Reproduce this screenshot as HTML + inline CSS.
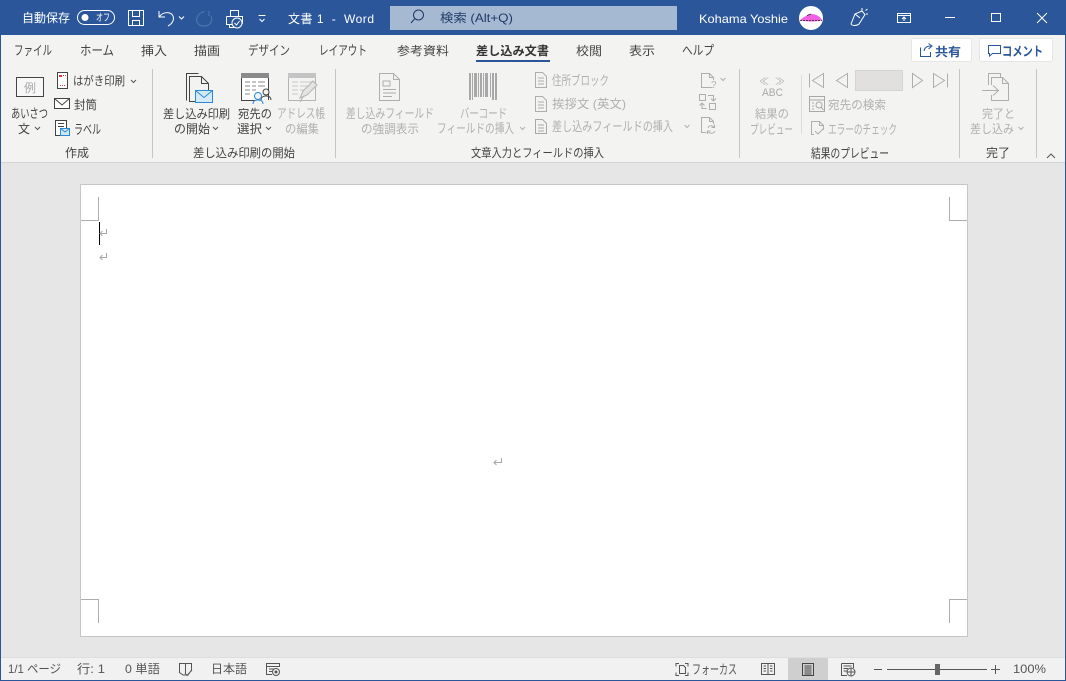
<!DOCTYPE html>
<html lang="ja"><head><meta charset="utf-8"><title>文書 1 - Word</title>
<style>
html,body{margin:0;padding:0;background:#e6e6e6;width:1066px;height:681px;overflow:hidden}
svg{display:block}
text{font-family:"Liberation Sans","Noto Sans CJK JP",sans-serif;font-size:12px;fill:#444;white-space:pre}
text.k{font-size:13px}
.w{fill:#fff}
.d{fill:#b0b0b0}
.g{fill:#3c3c3c}
.s{fill:#555}
.ic{fill:none;stroke:#444;stroke-width:1}
.ig{fill:none;stroke:#aeaeae;stroke-width:1}
.iw{fill:none;stroke:#fff;stroke-width:1}
.chv{fill:none;stroke:#555;stroke-width:1}
.chg{fill:none;stroke:#b0b0b0;stroke-width:1}
</style></head><body>
<svg width="1066" height="681" viewBox="0 0 1066 681" xmlns="http://www.w3.org/2000/svg">
<rect width="1066" height="681" fill="#e6e6e6"/>
<!-- ribbon -->
<rect x="0" y="35" width="1066" height="127" fill="#f3f3f2"/>
<rect x="0" y="162" width="1066" height="1" fill="#d4d4d4"/>
<!-- title bar -->
<rect width="1066" height="35" fill="#2b579a"/>
<text class="w" x="22" y="22" textLength="48" lengthAdjust="spacingAndGlyphs">自動保存</text>
<rect x="77.500" y="10.500" width="37" height="14" rx="7" class="iw"/>
<circle cx="85" cy="17.500" r="3.500" fill="#fff"/>
<text class="w" x="96" y="21" style="font-size:10px" textLength="14" lengthAdjust="spacingAndGlyphs">オフ</text>
<path class="iw" d="M128.500 10.500H143.500V25.500H128.500ZM132.500 10.500V16.500H139.500V10.500M132.500 25.500V20.500H139.500V25.500"/>
<path class="iw" stroke-width="1.300" d="M159 11V17H165M159.500 16.500C163 11.500 171 11.500 173 16C174.500 20 172 24 168 26"/>
<path class="chv" style="stroke:#fff" d="M179 16.500L181.500 19L184 16.500"/>
<path fill="none" stroke="#4a72ad" stroke-width="1.200" d="M209 11V16M204.500 11.500C198 13 195 19 197.500 23C200 27 208 27 210.500 23C212 20.500 212 18 211 16"/>
<path class="iw" d="M230.500 16.500V10.500H238.500V16.500M226.500 16.500H242.500V23.500M226.500 16.500V24.500H232M229.500 24.500V27.500H234"/>
<circle cx="237" cy="23" r="5" fill="#2b579a" stroke="#fff"/><path class="iw" d="M234.500 23L236.500 25L239.500 21"/>
<path class="iw" d="M258.500 15.500H265.500M259.500 19L262 21.500L264.500 19"/>
<text class="w" x="288" y="23" textLength="86" lengthAdjust="spacing">文書 1  -  Word</text>
<rect x="390" y="6" width="287" height="24" fill="#a6b9d3"/>
<circle cx="418.500" cy="15" r="5" fill="none" stroke="#1f3a66"/><path fill="none" stroke="#1f3a66" d="M414.500 19L411 23"/>
<text x="440" y="22" textLength="73" lengthAdjust="spacingAndGlyphs" style="fill:#1f3a66">検索 (Alt+Q)</text>
<text class="w" x="699" y="23" textLength="89" lengthAdjust="spacingAndGlyphs">Kohama Yoshie</text>
<circle cx="811" cy="18" r="12" fill="#fff"/>
<path d="M800 20C804 17 808 14 813 14C818 15 821 18 822 20C819 22 804 22 800 20Z" fill="#f060e0"/>
<path d="M800 20.500H822" stroke="#222" stroke-width=".8" stroke-dasharray="2 1" fill="none"/>
<path d="M807 15.500L811 14" stroke="#222" stroke-width=".7" fill="none"/>
<path class="iw" d="M851 24L855 14L862 11L865 14.500L859 24C856.500 26 852.500 26 851 24ZM855 14L860 18M862 11V8M865.500 10.500L867.500 9M866 14H868"/>
<path class="iw" d="M897.500 13.500H910.500V22.500H897.500ZM897.500 15.500H910.500M904 21V17.500M902 19L904 17L906 19"/>
<rect x="945" y="17" width="10" height="1" fill="#fff"/>
<rect x="991.500" y="13.500" width="9" height="8" class="iw"/>
<path class="iw" d="M1037 13L1047 23M1047 13L1037 23"/>
<!-- tabs -->
<g>
<text class="k" x="14" y="55" textLength="38" lengthAdjust="spacingAndGlyphs">ファイル</text>
<text class="k" x="80" y="55" textLength="34" lengthAdjust="spacingAndGlyphs">ホーム</text>
<text x="141" y="55" textLength="26" lengthAdjust="spacingAndGlyphs">挿入</text>
<text x="194" y="55" textLength="26" lengthAdjust="spacingAndGlyphs">描画</text>
<text class="k" x="248" y="55" textLength="42" lengthAdjust="spacingAndGlyphs">デザイン</text>
<text class="k" x="319" y="55" textLength="48" lengthAdjust="spacingAndGlyphs">レイアウト</text>
<text x="397" y="55" textLength="52" lengthAdjust="spacingAndGlyphs">参考資料</text>
<text x="476" y="55" textLength="73" lengthAdjust="spacingAndGlyphs" style="font-weight:700;fill:#333">差し込み文書</text>
<rect x="476" y="60" width="74" height="2" fill="#2b579a"/>
<text x="576" y="55" textLength="26" lengthAdjust="spacingAndGlyphs">校閲</text>
<text x="629" y="55" textLength="26" lengthAdjust="spacingAndGlyphs">表示</text>
<text class="k" x="682" y="55" textLength="32" lengthAdjust="spacingAndGlyphs">ヘルプ</text>
</g>
<!-- share / comment -->
<rect x="911.500" y="38.500" width="60" height="23" rx="2" fill="#fff" stroke="#e6e6e6"/>
<path fill="none" stroke="#2b579a" d="M920.500 47.500V56.500H930.500V52M924 51C924.500 47.500 927 46 931 46M928.500 43.500L932 46L928.500 49"/>
<text x="935" y="56" textLength="26" lengthAdjust="spacingAndGlyphs" style="font-weight:700;fill:#2b579a">共有</text>
<rect x="979.500" y="38.500" width="73" height="23" rx="2" fill="#fff" stroke="#e6e6e6"/>
<path fill="none" stroke="#2b579a" d="M988.500 45.500H1000.500V53.500H992.500L989.500 56V53.500H988.500Z"/>
<text class="k" x="1002" y="56" textLength="41" lengthAdjust="spacingAndGlyphs" style="font-weight:700;fill:#2b579a">コメント</text>
<!-- separators -->
<g fill="#c6c6c6">
<rect x="152" y="69" width="1" height="89"/><rect x="335" y="69" width="1" height="89"/>
<rect x="739" y="69" width="1" height="89"/><rect x="959" y="69" width="1" height="89"/>
<rect x="1036" y="69" width="1" height="89"/>
</g>
<rect x="801" y="75" width="1" height="59" fill="#dcdcdc"/>
<!-- group labels -->
<text x="65" y="157" textLength="24" lengthAdjust="spacingAndGlyphs">作成</text>
<text x="193" y="157" textLength="102" lengthAdjust="spacingAndGlyphs">差し込み印刷の開始</text>
<text x="471" y="157" textLength="133" lengthAdjust="spacingAndGlyphs">文章入力とフィールドの挿入</text>
<text class="k" x="811" y="158" textLength="78" lengthAdjust="spacingAndGlyphs">結果のプレビュー</text>
<text x="986" y="157" textLength="24" lengthAdjust="spacingAndGlyphs">完了</text>
<path class="chv" d="M1047 158L1051 154L1055 158"/>
<!-- 作成 -->
<rect x="16.500" y="77.500" width="27" height="19" fill="#f7f7f7" stroke="#444"/>
<text x="24" y="92" style="fill:#aaa" textLength="12">例</text>
<text class="k" x="11" y="118" textLength="37" lengthAdjust="spacingAndGlyphs">あいさつ</text>
<text x="18" y="133" textLength="12">文</text>
<path class="chv" d="M35 127L37.500 129.500L40 127"/>
<rect x="57.500" y="72.500" width="10" height="16" fill="#fff" stroke="#444"/>
<path d="M59 75h3v2h-3zM60 85h1v1h-1zM62 85h1v1h-1zM64 85h1v1h-1zM63 75h1v1h-1zM65 75h1v1h-1z" fill="#d83b3b"/>
<text x="73" y="85" textLength="52" lengthAdjust="spacingAndGlyphs">はがき印刷</text>
<path class="chv" d="M131 80L133.500 82.500L136 80"/>
<rect x="54.500" y="98.500" width="15" height="10" fill="#fff" stroke="#444"/><path class="ic" d="M54.500 98.500L62 105L69.500 98.500"/>
<text x="74" y="109" textLength="23" lengthAdjust="spacingAndGlyphs">封筒</text>
<rect x="55.500" y="120.500" width="11" height="15" fill="#fff" stroke="#444"/>
<path class="ic" d="M58 123.500H64M58 126.500H64"/>
<rect x="60.500" y="128.500" width="9" height="7" fill="#cfe6f7" stroke="#2b88d8"/><path fill="none" stroke="#2b88d8" d="M60.500 128.500L65 132L69.500 128.500"/>
<text class="k" x="74" y="134" textLength="27" lengthAdjust="spacingAndGlyphs">ラベル</text>
<!-- 差し込み印刷の開始 -->
<path class="ic" d="M186.500 100.500V73.500H198.500M189.500 102V76.500H201.500L208.500 83.500V91M201.500 76.500V83.500H208.500M189.500 101.500H195"/>
<rect x="195.500" y="90.500" width="17" height="12" fill="#d5eaf8" stroke="#2b88d8"/><path fill="none" stroke="#2b88d8" d="M195.500 90.500L204 97.500L212.500 90.500"/>
<text x="163" y="118" textLength="67" lengthAdjust="spacingAndGlyphs">差し込み印刷</text>
<text x="174" y="133" textLength="36" lengthAdjust="spacingAndGlyphs">の開始</text>
<path class="chv" d="M213 127L215.500 129.500L218 127"/>
<rect x="241.500" y="73.500" width="27" height="27" fill="#fff" stroke="#444"/><rect x="241" y="73" width="28" height="5" fill="#8a8a8a"/>
<path fill="none" stroke="#888" d="M245 82H250M252 82H256M258 82H265M245 86H250M252 86H256M258 86H265M245 90H250M252 90H256M245 94H250"/>
<circle cx="266" cy="92" r="3" fill="#f3f3f2" stroke="#444"/><path class="ic" d="M261 101C261 97 263 96 266 96C269 96 271 97 271 100"/>
<rect x="258" y="100" width="14" height="2" fill="#f3f3f2"/>
<circle cx="258" cy="96" r="3.500" fill="#f3f3f2" stroke="#2b88d8"/><path fill="#f3f3f2" stroke="#2b88d8" d="M253 104C253 101 255 100 258 100C261 100 263 101 263 104"/>
<text x="238" y="118" textLength="34" lengthAdjust="spacingAndGlyphs">宛先の</text>
<text x="237" y="133" textLength="25" lengthAdjust="spacingAndGlyphs">選択</text>
<path class="chv" d="M266 127L268.500 129.500L271 127"/>
<rect x="288.500" y="73.500" width="27" height="27" fill="none" stroke="#b4b4b4"/><rect x="288" y="73" width="28" height="5" fill="#c4c4c4"/>
<path fill="none" stroke="#c8c8c8" d="M292 82H298M300 82H312M292 86H298M300 86H308M292 90H298M300 90H304M292 94H298"/>
<path fill="#e4e4e4" stroke="#b4b4b4" d="M300 98L303 91L313 81L317 85L307 95ZM300 102L303 97"/>
<text class="d k" x="277" y="118" textLength="48" lengthAdjust="spacingAndGlyphs">アドレス帳</text>
<text class="d" x="285" y="133" textLength="34" lengthAdjust="spacingAndGlyphs">の編集</text>
<!-- 文章入力 -->
<path class="ig" d="M379.500 73.500H393.500L399.500 79.500V100.500H379.500ZM393.500 73.500V79.500H399.500M383 81H390V86H383ZM383 89.500H396M383 93H396M383 96.500H392"/>
<text class="d k" x="346" y="118" textLength="88" lengthAdjust="spacingAndGlyphs">差し込みフィールド</text>
<text class="d" x="361" y="133" textLength="58" lengthAdjust="spacingAndGlyphs">の強調表示</text>
<g fill="#a8a8a8"><rect x="469" y="73" width="2" height="27"/><rect x="472" y="73" width="1" height="27"/><rect x="474" y="73" width="3" height="24"/><rect x="478" y="73" width="1" height="24"/><rect x="480" y="73" width="2" height="24"/><rect x="483" y="73" width="1" height="24"/><rect x="485" y="73" width="3" height="24"/><rect x="490" y="73" width="1" height="24"/><rect x="492" y="73" width="2" height="27"/><rect x="495" y="73" width="2" height="27"/></g>
<text class="d k" x="460" y="118" textLength="47" lengthAdjust="spacingAndGlyphs">バーコード</text>
<text class="d k" x="437" y="133" textLength="77" lengthAdjust="spacingAndGlyphs">フィールドの挿入</text>
<path class="chg" d="M520 127L522.500 129.500L525 127"/>
<path class="ig" d="M535.500 72.500H542.500L546.500 76.500V87.500H535.500ZM538 78H544M538 81H544M538 84H544"/>
<text class="d k" x="552" y="85" textLength="57" lengthAdjust="spacingAndGlyphs">住所ブロック</text>
<path class="ig" d="M535.500 96.500H542.500L546.500 100.500V111.500H535.500ZM538 102H544M538 105H544M538 108H544"/>
<text class="d" x="552" y="108" textLength="74" lengthAdjust="spacingAndGlyphs">挨拶文 (英文)</text>
<path class="ig" style="stroke:#a8a8a8" d="M535.500 119.500H542.500L546.500 123.500V133.500H535.500ZM538 125H544M538 128H544M538 131H544"/>
<text class="d k" x="552" y="131" textLength="121" lengthAdjust="spacingAndGlyphs">差し込みフィールドの挿入</text>
<path class="chg" d="M684.500 125L687 127.500L689.500 125"/>
<path class="ig" d="M712.500 87.500H701.500V73.500H709.500L713.500 77.500V80M709.500 73.500V77.500H713.500"/>
<text x="711" y="88" style="font-size:10px;fill:#b0b0b0">?</text>
<path class="chg" d="M720.500 78L723 80.500L725.500 78"/>
<path class="ig" d="M699.500 94.500H705.500V100.500H699.500ZM709.500 103.500H715.500V109.500H709.500ZM708 95.500H713.500V100.500M711 98.500L713.500 101L716 98.500M706.500 108.500H702V103.500M699.500 105.500L702 103L704.500 105.500"/>
<path class="ig" d="M706.500 132.500H701.500V117.500H709.500L713.500 121.500V124M709.500 117.500V121.500H713.500"/>
<path class="ig" d="M708 128C708.500 125.500 712 125 714 127M715 131C714 133.500 710.500 134 708.500 132M714.500 124.500V127.500H711.500M707.500 134V131H710.500"/>
<!-- 結果のプレビュー -->
<text class="d" x="759" y="85" style="font-size:10px" textLength="26" lengthAdjust="spacing">≪ ≫</text>
<text class="d" x="762" y="96" style="font-size:11px;fill:#a8a8a8" textLength="21" lengthAdjust="spacingAndGlyphs">ABC</text>
<text class="d" x="755" y="118" textLength="34" lengthAdjust="spacingAndGlyphs">結果の</text>
<text class="d k" x="750" y="134" textLength="43" lengthAdjust="spacingAndGlyphs">プレビュー</text>
<path class="ig" d="M809.500 73.500V87.500M823.500 73.500V87.500L812.500 80.500ZM847.500 73.500V87.500L836.500 80.500ZM912.500 73.500V87.500L922.500 80.500ZM933.500 73.500V87.500L944.500 80.500ZM947.500 73.500V87.500"/>
<rect x="855.500" y="70.500" width="47" height="20" fill="#e1e0df" stroke="#d4d4d4"/>
<path class="ig" style="stroke:#a8a8a8" d="M809.500 96.500H824.500V111.500H809.500ZM809.500 100H824.500M812 103H814M812 106H814M812 109H814"/>
<circle cx="819" cy="105" r="3" fill="#f3f3f2" stroke="#a8a8a8"/><path class="ig" style="stroke:#a8a8a8" d="M821 107L823.500 110"/>
<text class="d" x="828" y="109" textLength="58" lengthAdjust="spacingAndGlyphs">宛先の検索</text>
<path class="ig" d="M814 134.500H811.500V121.500H819.500L823.500 125.500V130M819.500 121.500V125.500H823.500M815 131L818 134L824 128"/>
<text class="d k" x="828" y="134" textLength="69" lengthAdjust="spacingAndGlyphs">エラーのチェック</text>
<!-- 完了 -->
<path class="ig" d="M988.500 85V73.500H1000.500V77M991.500 85V77.500H1002.500L1008.500 83.500V100.500H991.500V95M1002.500 77.500V83.500H1008.500M982 90.500H998M993 85.500L998.500 90.500L993 95.500"/>
<text class="d" x="982" y="118" textLength="33" lengthAdjust="spacingAndGlyphs">完了と</text>
<text class="d" x="970" y="133" textLength="44" lengthAdjust="spacingAndGlyphs">差し込み</text>
<path class="chg" d="M1018.500 127L1021 129.500L1023.500 127"/>
<!-- page -->
<rect x="80.500" y="184.500" width="887" height="452" fill="#fff" stroke="#c6c6c6"/>
<path fill="none" stroke="#adadad" d="M98.500 197V220.500H81M949.500 197V220.500H967M81 599.500H98.500V623M967 599.500H949.500V623"/>
<rect x="99" y="222" width="1" height="23" fill="#000"/>
<g fill="none" stroke="#a8a8a8"><path d="M106.500 229V233.500H100M102.500 231L100 233.500L102.500 236"/>
<path d="M106.500 253V257.500H100M102.500 255L100 257.500L102.500 260"/>
<path d="M501.500 458V462.500H494M496.500 460L494 462.500L496.500 465"/></g>
<!-- status bar -->
<rect x="0" y="658" width="1066" height="22" fill="#f1f1f1"/>
<rect x="0" y="657" width="1066" height="1" fill="#dedede"/>
<rect x="788" y="658" width="40" height="22" fill="#cfcfcf"/>
<text class="s" x="8" y="673" textLength="53" lengthAdjust="spacingAndGlyphs">1/1 ページ</text>
<text class="s" x="77" y="673" textLength="28" lengthAdjust="spacingAndGlyphs">行: 1</text>
<text class="s" x="125" y="673" textLength="35" lengthAdjust="spacingAndGlyphs">0 単語</text>
<path fill="none" stroke="#555" d="M179.500 663.500H191.500V670L188 675H183L179.500 672.500ZM185.500 664V674M185 673L187 675.500L192 670"/>
<text class="s" x="211" y="673" textLength="36" lengthAdjust="spacingAndGlyphs">日本語</text>
<path fill="none" stroke="#555" d="M266.500 663.500H279.500V666.500H266.500ZM266.500 666.500V674.500H272M269 669H274M269 671.500H272"/>
<circle cx="276" cy="672" r="3.500" fill="#f1f1f1" stroke="#555"/><circle cx="276" cy="672" r="1.500" fill="#555"/>
<path fill="none" stroke="#555" d="M676 666.500V663.500H679M685 663.500H688V666.500M688 672.500V675.500H685M679 675.500H676V672.500M679.500 673.500V665.500H683.500L685.500 667.500V673.500Z"/>
<text class="s k" x="692" y="674" textLength="45" lengthAdjust="spacingAndGlyphs">フォーカス</text>
<path fill="none" stroke="#555" d="M761.500 663.500H774.500V674.500H761.500ZM768 663.500V674.500M763.500 666H766M763.500 668.500H766M763.500 671H766M770 666H772.500M770 668.500H772.500M770 671H772.500"/>
<path fill="none" stroke="#444" d="M802.500 663.500H813.500V675.500H802.500ZM804.500 666H811.500M804.500 668H811.500M804.500 670H811.500M804.500 672H811.500M804.500 674H811.500"/>
<path fill="none" stroke="#555" d="M841.500 663.500H853.500V668M841.500 663.500V675.500H847M843.500 666H851.500M843.500 668.500H848M843.500 671H847"/>
<circle cx="851" cy="672" r="4" fill="#f1f1f1" stroke="#555"/><path fill="none" stroke="#555" d="M847 672H855M851 668V676"/>
<rect x="874" y="669" width="8" height="1" fill="#555"/>
<rect x="887" y="669" width="100" height="1" fill="#555"/>
<rect x="935" y="664" width="5" height="11" fill="#666"/>
<path fill="none" stroke="#555" d="M991 669.500H1000M995.500 665V674"/>
<text class="s" x="1013" y="673" textLength="33" lengthAdjust="spacingAndGlyphs">100%</text>
<!-- window edges -->
<rect x="0" y="35" width="1" height="646" fill="#2b579a"/>
<rect x="1065" y="35" width="1" height="646" fill="#2b579a"/>
<rect x="0" y="680" width="1066" height="1" fill="#2b579a"/>
</svg>
</body></html>
